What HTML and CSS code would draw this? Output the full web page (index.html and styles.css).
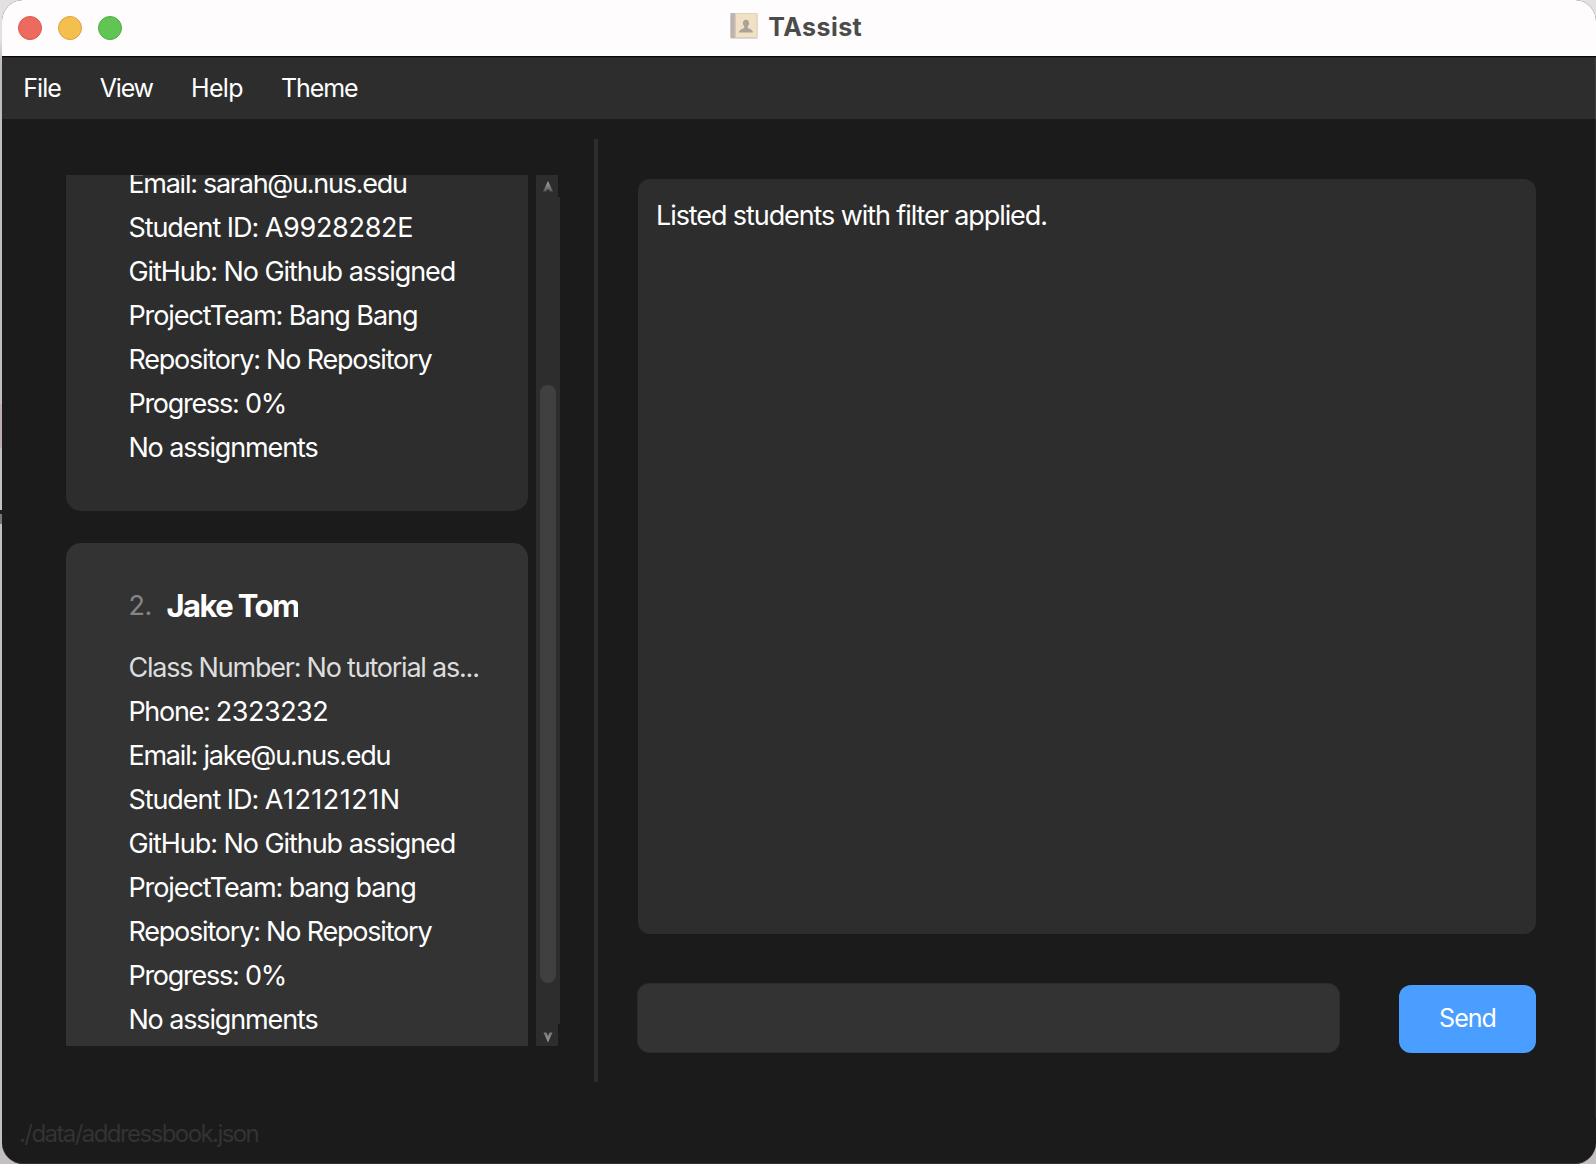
FILE: index.html
```
<!DOCTYPE html>
<html lang="en">
<head>
<meta charset="utf-8">
<title>TAssist</title>
<link rel="stylesheet" href="styles.css">
</head>
<body>
<div class="window">
  <header class="titlebar">
    <div class="lights"><i class="light close"></i><i class="light minimize"></i><i class="light zoom"></i></div>
    <div class="title">
      <svg class="book" width="28" height="28" viewBox="0 0 28 28">
        <rect x="0.5" y="1.6" width="27.2" height="25.4" rx="1.5" fill="#dcd8d6"/>
        <rect x="0.5" y="1" width="27" height="25" rx="1.3" fill="#dccfb8"/>
        <rect x="5" y="1.8" width="21.6" height="23.2" fill="#f0e1c5"/>
        <path d="M1.5 1H4.8V26H1.5Q0.5 26 0.5 25V2Q0.5 1 1.5 1Z" fill="#bbb3b3"/>
        <path d="M5.3 1.5V25.5" stroke="#cfc3b5" stroke-width="1"/>
        <path d="M16 7.8c2 0 3.1 1.3 3.1 3.2 0 1.5-.6 2.5-1.3 3.2v1.5c.5 1 4.9 1.2 5.2 4.8H9c.3-3.600 4.700-3.800 5.200-4.800v-1.500c-.7-.7-1.300-1.700-1.300-3.200 0-1.900 1.100-3.200 3.100-3.200z" fill="#aba397"/>
      </svg>
      <span>TAssist</span>
    </div>
  </header>
  <nav class="menu">
    <span class="file">File</span><span class="view">View</span><span class="help">Help</span><span class="theme">Theme</span>
  </nav>
  <main class="content">
    <section class="students">
      <div class="list">
        <article class="card first">
          <p class="email-sarah">Email: sarah@u.nus.edu</p>
          <p>Student ID: <span class="id-sarah">A9928282E</span></p>
          <p>GitHub: No Github assigned</p>
          <p class="team">ProjectTeam: Bang Bang</p>
          <p class="repo">Repository: No Repository</p>
          <p class="progress">Progress: 0%</p>
          <p class="none">No assignments</p>
        </article>
        <article class="card second">
          <div class="heading"><span class="index">2.</span><h2>Jake Tom</h2></div>
          <p class="class-number">Class Number: No tutorial as...</p>
          <p class="phone-row">Phone: <span class="phone">2323232</span></p>
          <p class="email-jake">Email: jake@u.nus.edu</p>
          <p>Student ID: <span class="id-jake">A1212121N</span></p>
          <p>GitHub: No Github assigned</p>
          <p class="team">ProjectTeam: bang bang</p>
          <p class="repo">Repository: No Repository</p>
          <p class="progress">Progress: 0%</p>
          <p class="none">No assignments</p>
        </article>
      </div>
      <div class="scrollbar">
        <div class="arrow"><svg width="10" height="11" viewBox="0 0 10 11"><defs><linearGradient id="up" x2="0" y2="1"><stop offset="0" stop-color="#aaa"/><stop offset="1" stop-color="#555"/></linearGradient></defs><path d="M5 0L10 10.500H7L5 8L3 10.500H0Z" fill="url(#up)"/></svg></div>
        <div class="track"><div class="thumb"></div></div>
        <div class="arrow down"><svg width="10" height="11" viewBox="0 0 10 11"><defs><linearGradient id="dn" x2="0" y2="1"><stop offset="0" stop-color="#777"/><stop offset="1" stop-color="#999"/></linearGradient></defs><path d="M5 10.500L0.500 0.500H3.500L5 4L6.500 0.500H9.500Z" fill="url(#dn)"/></svg></div>
      </div>
    </section>
    <div class="divider"></div>
    <section class="chat">
      <div class="output">Listed students with filter applied.</div>
      <div class="entry"><div class="input"></div><div class="send">Send</div></div>
    </section>
  </main>
  <footer class="status">./data/addressbook.json</footer>
</div>
</body>
</html>
```
FILE: styles.css
```
* { box-sizing: border-box; }
body {
  margin: 0;
  height: 1164px;
  overflow: hidden;
  background: linear-gradient(#e4e1e2 0 40px, #c2bec0 60px 404px, #bfadb0 404px 448px, #c4c1c2 448px 510px, #222 510px 514px, #777 514px 524px, #c4c0c2 524px);
  font-family: Inter, "Liberation Sans", sans-serif;
  color: #fff;
}
.window {
  margin-left: 2px;
  width: 1594px;
  height: 1164px;
  display: flex;
  flex-direction: column;
  background: #1b1b1b;
  border-radius: 21px;
  overflow: hidden;
  border-bottom: 1px solid #333;
}
.titlebar {
  height: 57px;
  flex: none;
  display: grid;
  grid-template-columns: 1fr auto 1fr;
  background: #fefcfd;
  border-bottom: 1px solid #080808;
}
.lights { display: flex; gap: 16px; padding: 16px 0 0 16px; }
.light { width: 24px; height: 24px; border-radius: 50%; }
.close { background: #ed6a5e; border: 1px solid #d8574c; }
.minimize { background: #f5bf4f; border: 1px solid #d9a23f; }
.zoom { background: #61c554; border: 1px solid #50ab41; }
.title {
  display: flex;
  gap: 10.5px;
  height: 54px;
  line-height: 54px;
  padding-right: 6px;
  font-size: 25px;
  font-weight: 700;
  letter-spacing: 0.45px;
  color: #4b4b4b;
}
.book { margin-top: 12px; }
.menu {
  height: 62px;
  flex: none;
  display: flex;
  padding-left: 21.3px;
  background: #2d2d2d;
  border-top: 1px solid #242424;
  border-right: 1px solid #414141;
  font-size: 25px;
  line-height: 60px;
  letter-spacing: -0.95px;
}
.file { width: 76.500px; }
.view { width: 91.200px; letter-spacing: -1.2px; }
.help { width: 90px; letter-spacing: -0.65px; }
.theme { letter-spacing: -1.1px; }
.content {
  height: 999px;
  flex: none;
  display: flex;
  border-right: 1px solid #2a2a2a;
}
.students { display: flex; gap: 8px; padding: 56px 34px 0 64px; }
.list { width: 462px; height: 871px; overflow: hidden; }
.card {
  padding-left: 62.400px;
  font-size: 27px;
  line-height: 44px;
  letter-spacing: -1.05px;
  white-space: nowrap;
}
.card p { margin: 0; }
.first { margin-top: -13px; padding-bottom: 41px; background: #2d2d2d; border-radius: 0 0 15px 15px; }
.second { margin-top: 32px; padding-top: 41px; height: 520px; background: #333; border-radius: 15px 15px 0 0; }
.heading { display: flex; height: 44px; margin-bottom: 18px; }
.index { width: 38px; color: #868686; letter-spacing: -0.4px; }
.heading h2 { margin: 0; width: 132px; overflow: hidden; font-size: 31px; line-height: 44px; letter-spacing: -1.55px; font-weight: 700; }
.class-number { color: #ddd; letter-spacing: -1.22px; }
.email-sarah { letter-spacing: -1.27px; }
.email-jake { letter-spacing: -1.2px; }
.repo { letter-spacing: -1.2px; }
.team { letter-spacing: -1.07px; }
.progress { letter-spacing: -1.25px; }
.none { letter-spacing: -1.13px; }
.id-sarah { letter-spacing: -0.3px; }
.id-jake { letter-spacing: 0.5px; }
.phone-row { letter-spacing: -1.3px; }
.phone { letter-spacing: -0.48px; }
.scrollbar { width: 24px; height: 871px; display: flex; flex-direction: column; }
.arrow { width: 22px; height: 22px; background: #2d2d2d; padding: 6px 0 0 7px; line-height: 0; }
.down { padding-top: 8px; }
.track { flex: 1; background: #2d2d2d; padding: 188px 4px 0; }
.thumb { height: 598px; border-radius: 8px; background: #404040; }
.divider { width: 4px; height: 943px; margin-top: 20px; background: #2d2d2d; }
.chat { width: 938px; padding: 60px 0 0 40px; }
.output {
  height: 755px;
  padding: 15px 18px;
  border-radius: 12px;
  background: #2d2d2d;
  font-size: 27px;
  line-height: 44px;
  letter-spacing: -1.09px;
}
.entry { display: flex; justify-content: space-between; margin-top: 49px; }
.input { width: 703px; height: 70px; margin-left: -1px; border-radius: 12px; background: #333; border: 1px solid #2b2b2b; }
.send {
  width: 137px;
  height: 68px;
  margin-top: 2px;
  border-radius: 12px;
  background: #4a9eff;
  font-size: 25px;
  line-height: 66px;
  letter-spacing: -0.96px;
  text-align: center;
}
.status { padding: 1px 0 0 17px; font-size: 24px; line-height: 30px; letter-spacing: -1.57px; color: #333; }
```
